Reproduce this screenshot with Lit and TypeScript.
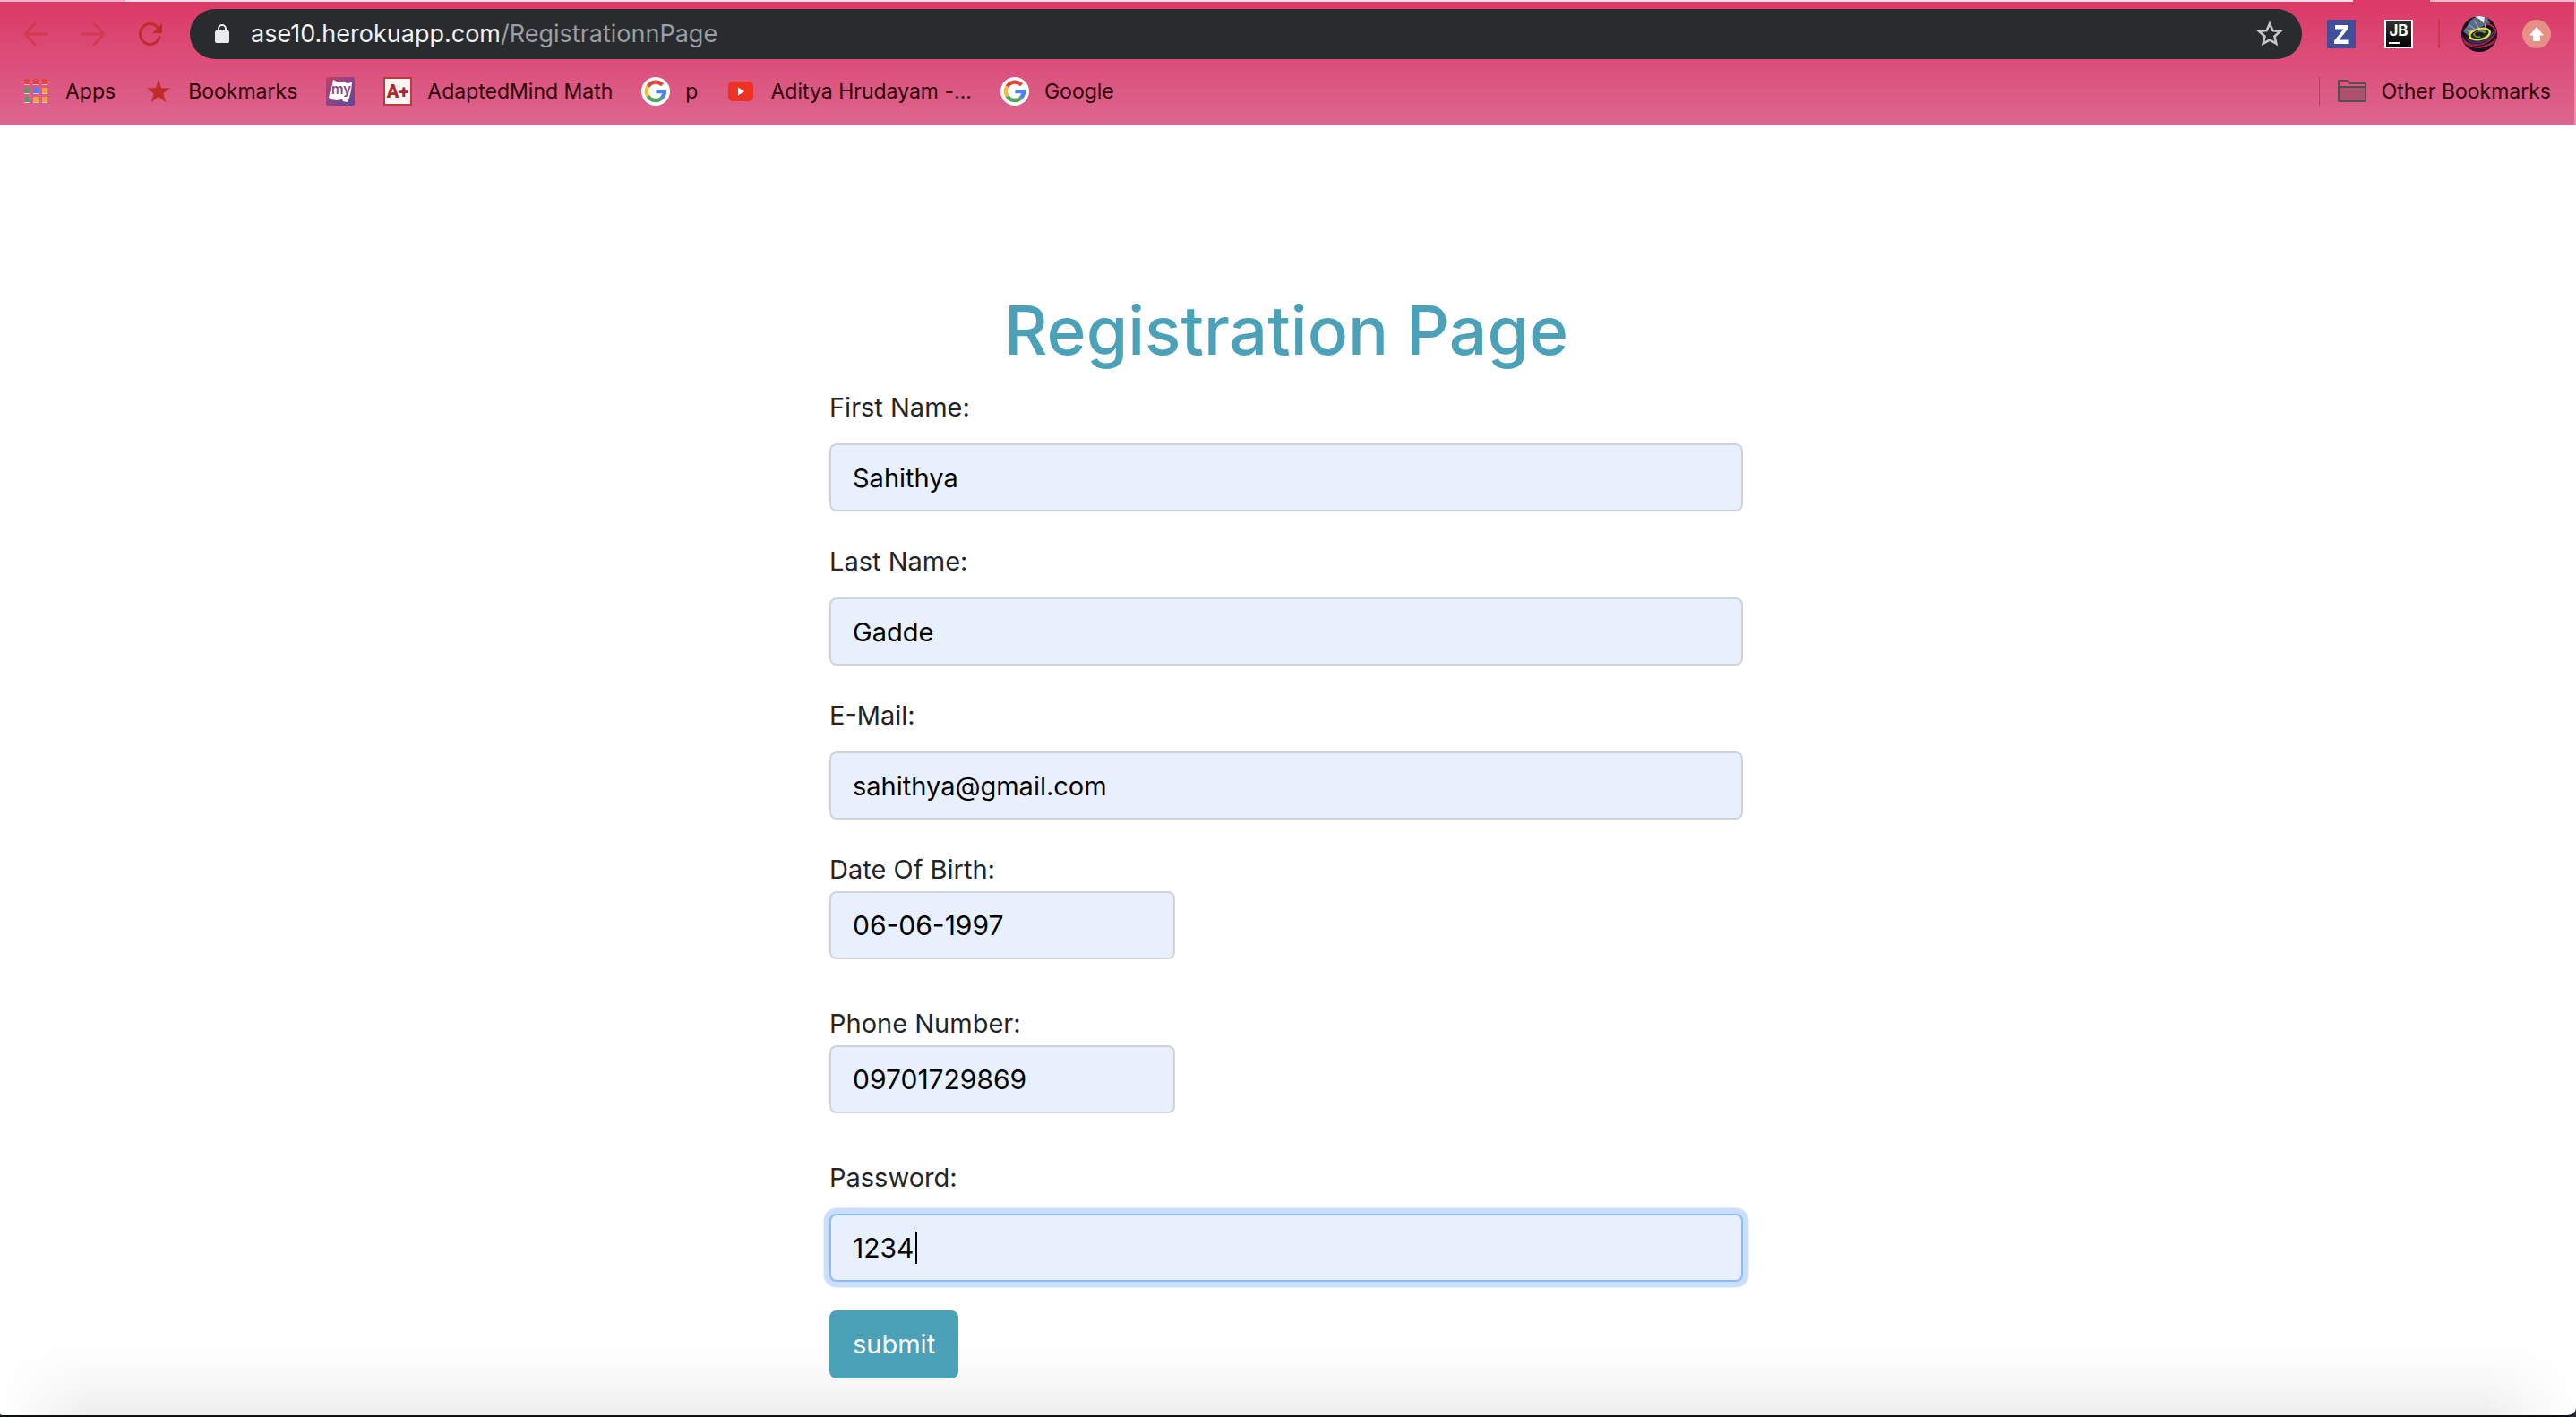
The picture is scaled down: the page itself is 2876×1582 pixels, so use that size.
import { LitElement, html, css, svg, nothing } from "lit";
import { customElement } from "lit/decorators.js";

const backIcon = html`<svg class="nav-icon" viewBox="0 0 28 28" aria-hidden="true"><path d="M26 14H3M13 2L2 14l11 12" /></svg>`;
const forwardIcon = html`<svg class="nav-icon" viewBox="0 0 28 28" aria-hidden="true"><path d="M2 14h23M15 2l11 12-11 12" /></svg>`;
const reloadIcon = html`<svg class="nav-icon reload" viewBox="0 0 28 28" aria-hidden="true">
  <path d="M24 17.500A11 11.500 0 1 1 22 6.500" /><path class="solid" d="M27 2v11H16z" /></svg>`;
const lockIcon = html`<svg class="lock" viewBox="0 0 16 22" aria-hidden="true">
  <rect y="7" width="16" height="14" rx="2" fill="#e8eaed" /><path d="M4 8V5a4 4 0 0 1 8 0v3" fill="none" stroke="#e8eaed" stroke-width="2" /></svg>`;
const starIcon = html`<svg class="icon" viewBox="0 0 32 32" aria-hidden="true">
  <path d="M16 4.500l3.400 7.600 8.300.9-6.200 5.500 1.800 8.200-7.300-4.200-7.300 4.200 1.800-8.200-6.200-5.500 8.300-.9z" fill="none" stroke="#c4c7ca" stroke-width="2.600" /></svg>`;

const appsIcon = html`<svg class="small" viewBox="0 0 26 28" aria-hidden="true">
  ${[
    ["#e8453c", "#e8453c", "#e8453c"],
    ["#4f9f5f", "#4285f4", "#e8a63a"],
    ["#4f9f5f", "#e8a63a", "#e8a63a"],
  ].map((row, y) => row.map((fill, x) => svg`<rect x=${x * 10} y=${y * 10 + 6} width="6" height="1" fill="#f3c4d2"/><rect x=${x * 10} y=${y * 10} width="6" height="6" fill=${fill}/>`))}
</svg>`;
const bookmarkStar = html`<svg class="small" viewBox="0 0 26 28" aria-hidden="true"><path d="M13 1l3.200 9.200H26l-7.700 6 2.900 9.800L13 20l-8.200 6 2.900-9.800L0 10.200h9.800z" fill="#bf2c29" /></svg>`;
const myIcon = html`<svg class="icon" viewBox="0 0 32 32" role="img" aria-label="my">
  <defs><linearGradient id="my" x1="0" y1="0" x2="1" y2="1"><stop offset="0" stop-color="#c23f63" /><stop offset=".5" stop-color="#8c4585" /><stop offset="1" stop-color="#5a4a97" /></linearGradient></defs>
  <rect width="32" height="32" rx="2" fill="url(#my)" />
  <path d="M8 3l6 3 5-1 5 2 5-1-1 9-2 8-2 5-5-1-1-2-6 1-6-1-3-2 2-9 2-5z" fill="#fff" />
  <text x="17" y="19" text-anchor="middle" font-family="Inter, sans-serif" font-weight="600" font-size="15" fill="#93497f">my</text></svg>`;
const aPlusIcon = html`<svg class="icon" viewBox="0 0 32 32" aria-hidden="true">
  <rect x="1" y="1" width="30" height="30" fill="#fbf6f6" stroke="#c2393b" stroke-width="2" />
  <text x="16" y="23" text-anchor="middle" font-family="Roboto, sans-serif" font-weight="900" font-size="20" fill="#b3262b">A+</text></svg>`;
const googleIcon = html`<svg class="icon" viewBox="0 0 32 32" aria-hidden="true">
  <circle cx="16" cy="16" r="16" fill="#fff" />
  <g fill="none" stroke-width="4.400">
    <path d="M23.500 8.800A10 10 0 0 0 7.500 10.600" stroke="#dc4a3d" /><path d="M7.500 10.600a10 10 0 0 0 0 10.800" stroke="#f5bc3b" />
    <path d="M7.500 21.400a10 10 0 0 0 15 2.200" stroke="#52a55b" /><path d="M22.500 23.600A10 10 0 0 0 26 16.100H16.400" stroke="#4c83ec" /></g></svg>`;
const youtubeIcon = html`<svg class="tube" viewBox="0 0 28 22" aria-hidden="true"><rect width="28" height="22" rx="5" fill="#ec3223" /><path d="M11 6.500v9l7-4.500z" fill="#fff" /></svg>`;
const folderIcon = html`<svg class="icon" viewBox="0 0 32 32" aria-hidden="true">
  <path d="M1 11h30v15H1z" fill="#ad5070" /><path d="M1 5q0-1 1-1h9l3 3h16q1 0 1 1v18q0 1-1 1H2q-1 0-1-1zM1 11h30" fill="none" stroke="#53504d" stroke-width="2" /></svg>`;
const zIcon = html`<svg class="icon" viewBox="0 0 32 32" role="img" aria-label="Z"><rect width="32" height="32" fill="#414f9b" /><path d="M9 6h15v3.500L13.500 22.500H24.500V27H8v-3.500L18.500 10.500H9z" fill="#fff" /></svg>`;
const jbIcon = html`<svg class="icon" viewBox="0 0 32 32" role="img" aria-label="JB">
  <defs><linearGradient id="jb" x2="0" y2="1"><stop stop-color="#333" /><stop offset="1" stop-color="#000" /></linearGradient></defs>
  <rect x="1" y="1" width="30" height="30" fill="url(#jb)" stroke="#fff" stroke-width="2" />
  <text x="16" y="18" text-anchor="middle" font-family="Inter, sans-serif" font-weight="700" font-size="17" fill="#fff">JB</text><rect x="5" y="25" width="12" height="2" fill="#fff" /></svg>`;
const avatarIcon = html`<svg class="avatar-icon" viewBox="0 0 40 40" aria-hidden="true">
  <defs><clipPath id="disc"><circle cx="20" cy="20" r="20" /></clipPath></defs>
  <g clip-path="url(#disc)"><rect width="40" height="40" fill="#170d1d" />
    <path d="M2 17L12 3l8-3 9 2 3 6-12 5-12 9z" fill="#5a6b86" /><path d="M14 0h12l-1 8-4-4z" fill="#e7edf2" />
    <path d="M4 15l12 4M8 9l10 8M14 5l7 10M28 4l-2 9" stroke="#a9b5c7" />
    <g fill="none"><path d="M1 23Q4 33 18 32T39 17" stroke="#8d2345" stroke-width="2" /><path d="M27 8q9 2 12 9M3 29q10 8 22 5t13-9" stroke="#b02842" stroke-width="2" /><path d="M5 24q5 7 16 5t15-12" stroke="#303a80" stroke-width="2" /></g>
    <ellipse cx="20.500" cy="20" rx="11.500" ry="6" transform="rotate(-12 20.500 20)" fill="#1f2a1e" stroke="#e5dc4b" stroke-width="2.400" />
    <path d="M13 20q6-6 15-3-3 4-7 3 2 3-1 4-6 0-7-4" fill="#7d9056" /><ellipse cx="20" cy="20" rx="5" ry="2.500" fill="#18201a" /></g></svg>`;
const updateIcon = html`<svg class="icon" viewBox="0 0 32 32" aria-hidden="true"><circle cx="16" cy="16" r="16" fill="#e69086" /><path d="M16 8l8 9.500h-4V24h-8v-6.500H8z" fill="#fff" /></svg>`;

const bookmarks = [
  { icon: appsIcon, label: "Apps", name: "apps" },
  { icon: bookmarkStar, label: "Bookmarks", name: "marked" },
  { icon: myIcon, label: "", name: "my" },
  { icon: aPlusIcon, label: "AdaptedMind Math", name: "math" },
  { icon: googleIcon, label: "p", name: "p" },
  { icon: youtubeIcon, label: "Aditya Hrudayam -...", name: "video" },
  { icon: googleIcon, label: "Google", name: "google" },
];

@customElement("browser-bar")
export class BrowserBar extends LitElement {
  static styles = css`
    :host { display: block; border-bottom: 1px solid #9c4263; background: linear-gradient(#db3865, #dc668f); font-family: Inter, "Liberation Sans", sans-serif; }
    * { box-sizing: border-box; }
    button { border: 0; padding: 0; background: none; display: flex; }
    a { color: inherit; text-decoration: none; }
    svg { display: block; flex: none; }
    .tabs { display: flex; height: 2px; }
    .tab-first { width: 140px; background: #efb2c8; }
    .tab-rest { flex: 1; background: #f1dbe6; }
    .tab-open { width: 86px; }
    .tab-end { width: 163px; background: #f1b9cb; }
    .rows { border-right: 2px solid #e592ab; }
    .toolbar { display: flex; align-items: center; height: 72px; padding: 0 26px; }
    .nav { display: flex; gap: 36px; margin-right: 30px; }
    .nav-icon { width: 28px; height: 28px; fill: none; stroke: #d23a50; stroke-width: 3; stroke-linecap: round; stroke-linejoin: round; }
    .reload { stroke: #c02c2b; }
    .solid { fill: #c02c2b; stroke: none; }
    .address { flex: 1; height: 56px; border-radius: 28px; background: #292c2f; display: flex; align-items: center; padding: 0 20px 0 28px; }
    .lock { width: 16px; height: 22px; margin-right: 24px; }
    .url { flex: 1; font-size: 27px; line-height: 40px; color: #9b9ea2; }
    .domain { color: #f1f3f4; }
    .icon { width: 32px; height: 32px; }
    .small { width: 32px; height: 28px; }
    .tube { width: 32px; height: 22px; }
    .extensions { display: flex; align-items: center; margin-left: 28px; }
    .tools { display: flex; gap: 32px; }
    .divider { width: 1px; height: 32px; background: #cf3650; }
    .extensions .divider { width: 2px; margin: 0 24px 0 28px; }
    .account { display: flex; align-items: center; gap: 28px; }
    .avatar-icon { width: 40px; height: 40px; }
    .bookmarks { display: flex; align-items: center; height: 65px; padding: 0 26px 10px 24px; font-size: 23px; line-height: 32px; color: #2d0208; }
    .list { display: flex; align-items: center; gap: 32px; flex: 1; }
    .link { display: flex; align-items: center; gap: 17px; white-space: nowrap; }
    .other { display: flex; align-items: center; gap: 20px; }
  `;
  render() {
    return html`
      <div class="tabs"><span class="tab-first"></span><span class="tab-rest"></span><span class="tab-open"></span><span class="tab-end"></span></div>
      <div class="rows">
        <div class="toolbar">
          <nav class="nav" aria-label="Navigation">
            <button aria-label="Back">${backIcon}</button>
            <button aria-label="Forward">${forwardIcon}</button>
            <button aria-label="Reload">${reloadIcon}</button>
          </nav>
          <div class="address">
            ${lockIcon}
            <div class="url"><span class="domain">ase10.herokuapp.com</span>/RegistrationnPage</div>
            <button aria-label="Bookmark this page">${starIcon}</button>
          </div>
          <div class="extensions">
            <div class="tools">
              <button>${zIcon}</button>
              <button>${jbIcon}</button>
            </div>
            <span class="divider"></span>
            <div class="account">
              <button aria-label="Profile">${avatarIcon}</button>
              <button aria-label="Update">${updateIcon}</button>
            </div>
          </div>
        </div>
        <div class="bookmarks">
          <nav class="list" aria-label="Bookmarks">
            ${bookmarks.map((b) => html`<a class="link" href="#${b.name}">${b.icon}${b.label ? html`<span>${b.label}</span>` : nothing}</a>`)}
          </nav>
          <div class="other">
            <span class="divider"></span>
            <a class="link" href="#other">${folderIcon}<span>Other Bookmarks</span></a>
          </div>
        </div>
      </div>
    `;
  }
}

const fields = [
  { id: "first", label: "First Name:", value: "Sahithya", type: "text", kind: "wide" },
  { id: "last", label: "Last Name:", value: "Gadde", type: "text", kind: "wide" },
  { id: "email", label: "E-Mail:", value: "sahithya@gmail.com", type: "email", kind: "wide" },
  { id: "birth", label: "Date Of Birth:", value: "06-06-1997", type: "text", kind: "short numeric" },
  { id: "phone", label: "Phone Number:", value: "09701729869", type: "tel", kind: "short numeric" },
  { id: "password", label: "Password:", value: "1234", type: "text", kind: "wide numeric active" },
];

@customElement("app-root")
export class AppRoot extends LitElement {
  static styles = css`
    :host { display: flex; flex-direction: column; min-height: 100vh; background: #1d2a44; font-family: Inter, "Liberation Sans", sans-serif; font-size: 29px; line-height: 48px; color: #212529; }
    * { box-sizing: border-box; }
    .page {
      flex: 1; padding: 181px 4px 40px 0; border-bottom: 2px solid #0b0f18; border-radius: 0 0 10px 4px;
      background:
        linear-gradient(to right, #ffffff, #ffffff00 100px),
        linear-gradient(to left, #ffffff, #ffffff00 100px),
        linear-gradient(to top, #eeeeee, #f6f6f6 32px, #fdfdfd 64px, #ffffff 96px);
    }
    .form { width: 1020px; max-width: 100%; margin: 0 auto; }
    .title { margin: 0 0 14px; font-size: 75px; line-height: 96px; font-weight: 500; text-align: center; color: #4ba1b7; }
    .field { margin-bottom: 32px; }
    .label { display: block; }
    .wide .box { margin-top: 16px; }
    .short { width: 386px; max-width: 100%; margin-bottom: 48px; }
    .box { display: grid; position: relative; }
    .input { width: 100%; height: 76px; margin: 0; padding: 0 24px; border: 2px solid #ced4da; border-radius: 8px; background: #e8effd; font: inherit; color: #000; outline: none; }
    .numeric .input { font-size: 30px; }
    .active .input { border-color: #8cbbfa; box-shadow: 0 0 0 6px #cbdefe, 0 0 0 7px #e6effd; }
    .caret { position: absolute; left: 96px; top: 20px; width: 2px; height: 36px; background: #000; }
    .submit { height: 76px; padding: 0 26px; border: 0; border-radius: 8px; background: #4ba1b7; color: #fff; font: inherit; display: block; }
  `;
  render() {
    return html`
      <browser-bar></browser-bar>
      <main class="page">
        <form class="form" @submit=${(e: Event) => e.preventDefault()}>
          <h1 class="title">Registration Page</h1>
          ${fields.map(
            (f) => html`<div class="field ${f.kind}">
              <label class="label" for=${f.id}>${f.label}</label>
              <div class="box">
                <input class="input" id=${f.id} name=${f.id} type=${f.type} .value=${f.value} />
                ${f.id === "password" ? html`<span class="caret"></span>` : nothing}
              </div>
            </div>`
          )}
          <button class="submit" type="submit">submit</button>
        </form>
      </main>
    `;
  }
}
